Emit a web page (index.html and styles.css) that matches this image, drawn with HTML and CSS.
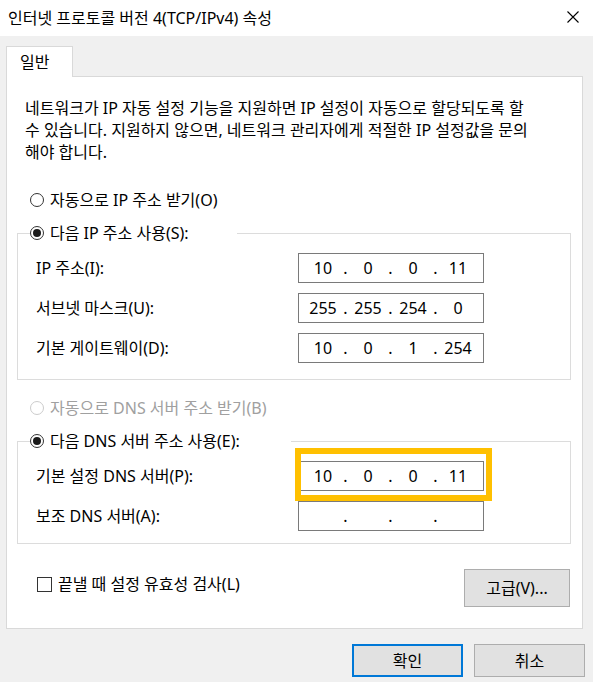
FILE: index.html
```html
<!DOCTYPE html>
<html lang="ko">
<head>
<meta charset="utf-8">
<title>인터넷 프로토콜 버전 4(TCP/IPv4) 속성</title>
<link rel="stylesheet" href="styles.css">
</head>
<body>
<div class="window">
  <div class="titlebar">
    <span class="title">인터넷 프로토콜 버전 4(TCP/IPv4) 속성</span>
    <svg class="close" width="12" height="12" viewBox="0 0 12 12"><path d="M0.5 0.5 L11.5 11.5 M11.5 0.5 L0.5 11.5" stroke="#000" stroke-width="1.1" fill="none"/></svg>
  </div>
  <div class="content">
    <div class="tabs"><div class="tab">일반</div></div>
    <div class="panel">
      <p class="intro">네트워크가 IP 자동 설정 기능을 지원하면 IP 설정이 자동으로 할당되도록 할<br>수 있습니다. 지원하지 않으면, 네트워크 관리자에게 적절한 IP 설정값을 문의<br>해야 합니다.</p>

      <div class="radio-row first"><span class="radio"></span><span>자동으로 IP 주소 받기(O)</span></div>

      <fieldset class="group group-ip">
        <legend class="legend legend-ip"><span class="legend-inner"><span class="radio checked"></span><span>다음 IP 주소 사용(S):</span></span></legend>
        <div class="field">
          <span class="field-label">IP 주소(I):</span>
          <div class="ip"><span class="oct">10</span><span class="dot">.</span><span class="oct">0</span><span class="dot">.</span><span class="oct">0</span><span class="dot">.</span><span class="oct">11</span></div>
        </div>
        <div class="field">
          <span class="field-label">서브넷 마스크(U):</span>
          <div class="ip"><span class="oct">255</span><span class="dot">.</span><span class="oct">255</span><span class="dot">.</span><span class="oct">254</span><span class="dot">.</span><span class="oct">0</span></div>
        </div>
        <div class="field">
          <span class="field-label">기본 게이트웨이(D):</span>
          <div class="ip"><span class="oct">10</span><span class="dot">.</span><span class="oct">0</span><span class="dot">.</span><span class="oct">1</span><span class="dot">.</span><span class="oct">254</span></div>
        </div>
      </fieldset>

      <div class="radio-row disabled"><span class="radio"></span><span>자동으로 DNS 서버 주소 받기(B)</span></div>

      <fieldset class="group group-dns">
        <legend class="legend legend-dns"><span class="legend-inner"><span class="radio checked"></span><span>다음 DNS 서버 주소 사용(E):</span></span></legend>
        <div class="field">
          <span class="field-label">기본 설정 DNS 서버(P):</span>
          <div class="ip highlighted"><span class="oct">10</span><span class="dot">.</span><span class="oct">0</span><span class="dot">.</span><span class="oct">0</span><span class="dot">.</span><span class="oct">11</span><span class="mark"></span></div>
        </div>
        <div class="field">
          <span class="field-label">보조 DNS 서버(A):</span>
          <div class="ip"><span class="oct"></span><span class="dot">.</span><span class="oct"></span><span class="dot">.</span><span class="oct"></span><span class="dot">.</span><span class="oct"></span></div>
        </div>
      </fieldset>

      <div class="bottom-row">
        <div class="check-row"><span class="checkbox"></span><span>끝낼 때 설정 유효성 검사(L)</span></div>
        <button class="btn btn-advanced">고급(V)...</button>
      </div>
    </div>
    <div class="footer">
      <button class="btn btn-ok">확인</button>
      <button class="btn">취소</button>
    </div>
  </div>
</div>
</body>
</html>
```

FILE: styles.css
```css
* { box-sizing: border-box; }

html, body {
  margin: 0;
  padding: 0;
}

body {
  width: 593px;
  height: 682px;
  overflow: hidden;
  background: #f0f0f0;
  color: #000;
  font-family: "Noto Sans", "Noto Sans CJK KR", sans-serif;
  font-size: 16px;
  line-height: 20px;
}

.window {
  width: 593px;
  height: 682px;
  display: flex;
  flex-direction: column;
}

.titlebar {
  height: 36px;
  background: #fff;
  display: flex;
  align-items: center;
  justify-content: space-between;
  padding: 0 14px 0 8px;
}

.title {
  line-height: 20px;
}

.close {
  display: block;
  margin-top: -2px;
}

.content {
  padding: 10px 0 0 6px;
}

.tabs {
  display: flex;
  height: 30px;
}

.tab {
  width: 67px;
  height: 31px;
  background: #fff;
  border: 1px solid #d9d9d9;
  border-bottom: none;
  padding: 5px 0 0 13px;
  line-height: 20px;
  position: relative;
  z-index: 1;
}

.panel {
  width: 577px;
  height: 553px;
  background: #fff;
  border: 1px solid #d9d9d9;
}

.intro {
  margin: 20px 0 0 18px;
  line-height: 22px;
  white-space: nowrap;
}

.radio-row {
  display: flex;
  align-items: center;
  gap: 6px;
  height: 20px;
  margin-left: 23px;
}

.radio-row.first {
  margin-top: 27px;
}

.radio-row.disabled {
  margin-top: 18px;
  color: #a0a0a0;
}

.radio {
  width: 14px;
  height: 14px;
  border: 1px solid #333;
  border-radius: 50%;
  background: #fff;
  flex: none;
  position: relative;
}

.radio.checked::after {
  content: "";
  position: absolute;
  left: 2px;
  top: 2px;
  width: 8px;
  height: 8px;
  border-radius: 50%;
  background: #1a1a1a;
}

.radio-row.disabled .radio {
  border-color: #cccccc;
}

.group {
  margin: 13px 0 0 10px;
  padding: 10px 0 16px 12px;
  width: 554px;
  border: 1px solid #dcdcdc;
  min-inline-size: 0;
}

.group-dns {
  padding-bottom: 12px;
}

.legend {
  padding: 0;
  height: 20px;
}

.legend-ip { width: 207px; }
.legend-dns { width: 261px; }

.legend-inner {
  display: flex;
  align-items: center;
  gap: 6px;
  height: 20px;
}

.field {
  display: flex;
  align-items: center;
  height: 30px;
  margin-left: 6px;
}

.field + .field {
  margin-top: 10px;
}

.field-label {
  width: 262px;
  flex: none;
}

.ip {
  width: 186px;
  height: 30px;
  border: 1px solid #7a7a7a;
  display: flex;
  align-items: center;
  padding-left: 6px;
  position: relative;
}

.oct {
  width: 36px;
  text-align: center;
}

.dot {
  width: 9px;
  text-align: center;
}

.mark {
  position: absolute;
  left: -4px;
  top: -14px;
  right: -9px;
  bottom: -11px;
  border: 6px solid #ffc000;
  pointer-events: none;
}

.bottom-row {
  display: flex;
  justify-content: space-between;
  align-items: flex-start;
  margin: 25px 12px 0 30px;
}

.check-row {
  display: flex;
  align-items: center;
  gap: 6px;
  height: 20px;
  margin-top: 5px;
}

.checkbox {
  width: 15px;
  height: 15px;
  border: 1px solid #333;
  background: #fff;
  flex: none;
}

.btn {
  font: inherit;
  color: #000;
  background: #e1e1e1;
  border: 1px solid #adadad;
  border-radius: 0;
  padding: 0;
  width: 111px;
  height: 33px;
  line-height: 20px;
}

.btn-advanced {
  width: 106px;
  height: 38px;
}

.btn-ok {
  border: 2px solid #0078d7;
}

.footer {
  display: flex;
  justify-content: flex-end;
  gap: 11px;
  margin-top: 15px;
  padding-right: 8px;
}
```
